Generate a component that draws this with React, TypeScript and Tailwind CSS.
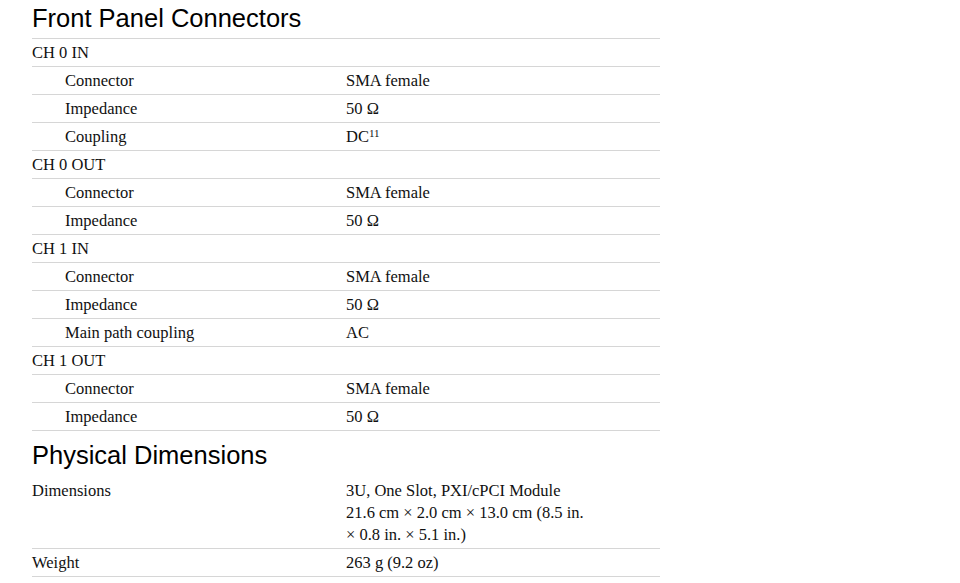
const rows: { label: string; value?: React.ReactNode; sub?: boolean }[] = [
  { label: 'CH 0 IN' },
  { label: 'Connector', value: 'SMA female', sub: true },
  { label: 'Impedance', value: '50 Ω', sub: true },
  {
    label: 'Coupling',
    value: (
      <>
        DC<sup className="text-[11px]">11</sup>
      </>
    ),
    sub: true,
  },
  { label: 'CH 0 OUT' },
  { label: 'Connector', value: 'SMA female', sub: true },
  { label: 'Impedance', value: '50 Ω', sub: true },
  { label: 'CH 1 IN' },
  { label: 'Connector', value: 'SMA female', sub: true },
  { label: 'Impedance', value: '50 Ω', sub: true },
  { label: 'Main path coupling', value: 'AC', sub: true },
  { label: 'CH 1 OUT' },
  { label: 'Connector', value: 'SMA female', sub: true },
  { label: 'Impedance', value: '50 Ω', sub: true },
];

const heading = 'font-["Liberation_Sans",Arial,sans-serif] text-[25.5px] leading-[30px] text-black';

const App = () => {
  return (
    <div className="min-h-screen bg-white font-['Liberation_Serif','Times_New_Roman',serif] text-[16.5px] text-[#111]">
      <div className="ml-[32px] w-[628px]">
        <h2 className={`${heading} pt-[3px] pb-[5px]`}>Front Panel Connectors</h2>

        <div className="border-b border-[#d6d6d6]">
          {rows.map((row, i) => (
            <div key={i} className="flex border-t border-[#d6d6d6] pt-[3px] pb-[2px] leading-[22px]">
              <div className={row.sub ? 'w-[314px] pl-[33px]' : 'w-[314px]'}>{row.label}</div>
              <div className="w-[246px]">{row.value}</div>
            </div>
          ))}
        </div>

        <h2 className={`${heading} mt-[9px] pb-[9px]`}>Physical Dimensions</h2>

        <div className="border-b border-[#d6d6d6]">
          <div className="flex pt-[1px] pb-[2px] leading-[22px]">
            <div className="w-[314px]">Dimensions</div>
            <div className="w-[246px]">
              3U, One Slot, PXI/cPCI Module
              <br />
              21.6 cm × 2.0 cm × 13.0 cm (8.5 in. × 0.8 in. × 5.1 in.)
            </div>
          </div>
          <div className="flex border-t border-[#d6d6d6] pt-[3px] pb-[2px] leading-[22px]">
            <div className="w-[314px]">Weight</div>
            <div className="w-[246px]">263 g (9.2 oz)</div>
          </div>
        </div>
      </div>
    </div>
  );
};

export default App;
